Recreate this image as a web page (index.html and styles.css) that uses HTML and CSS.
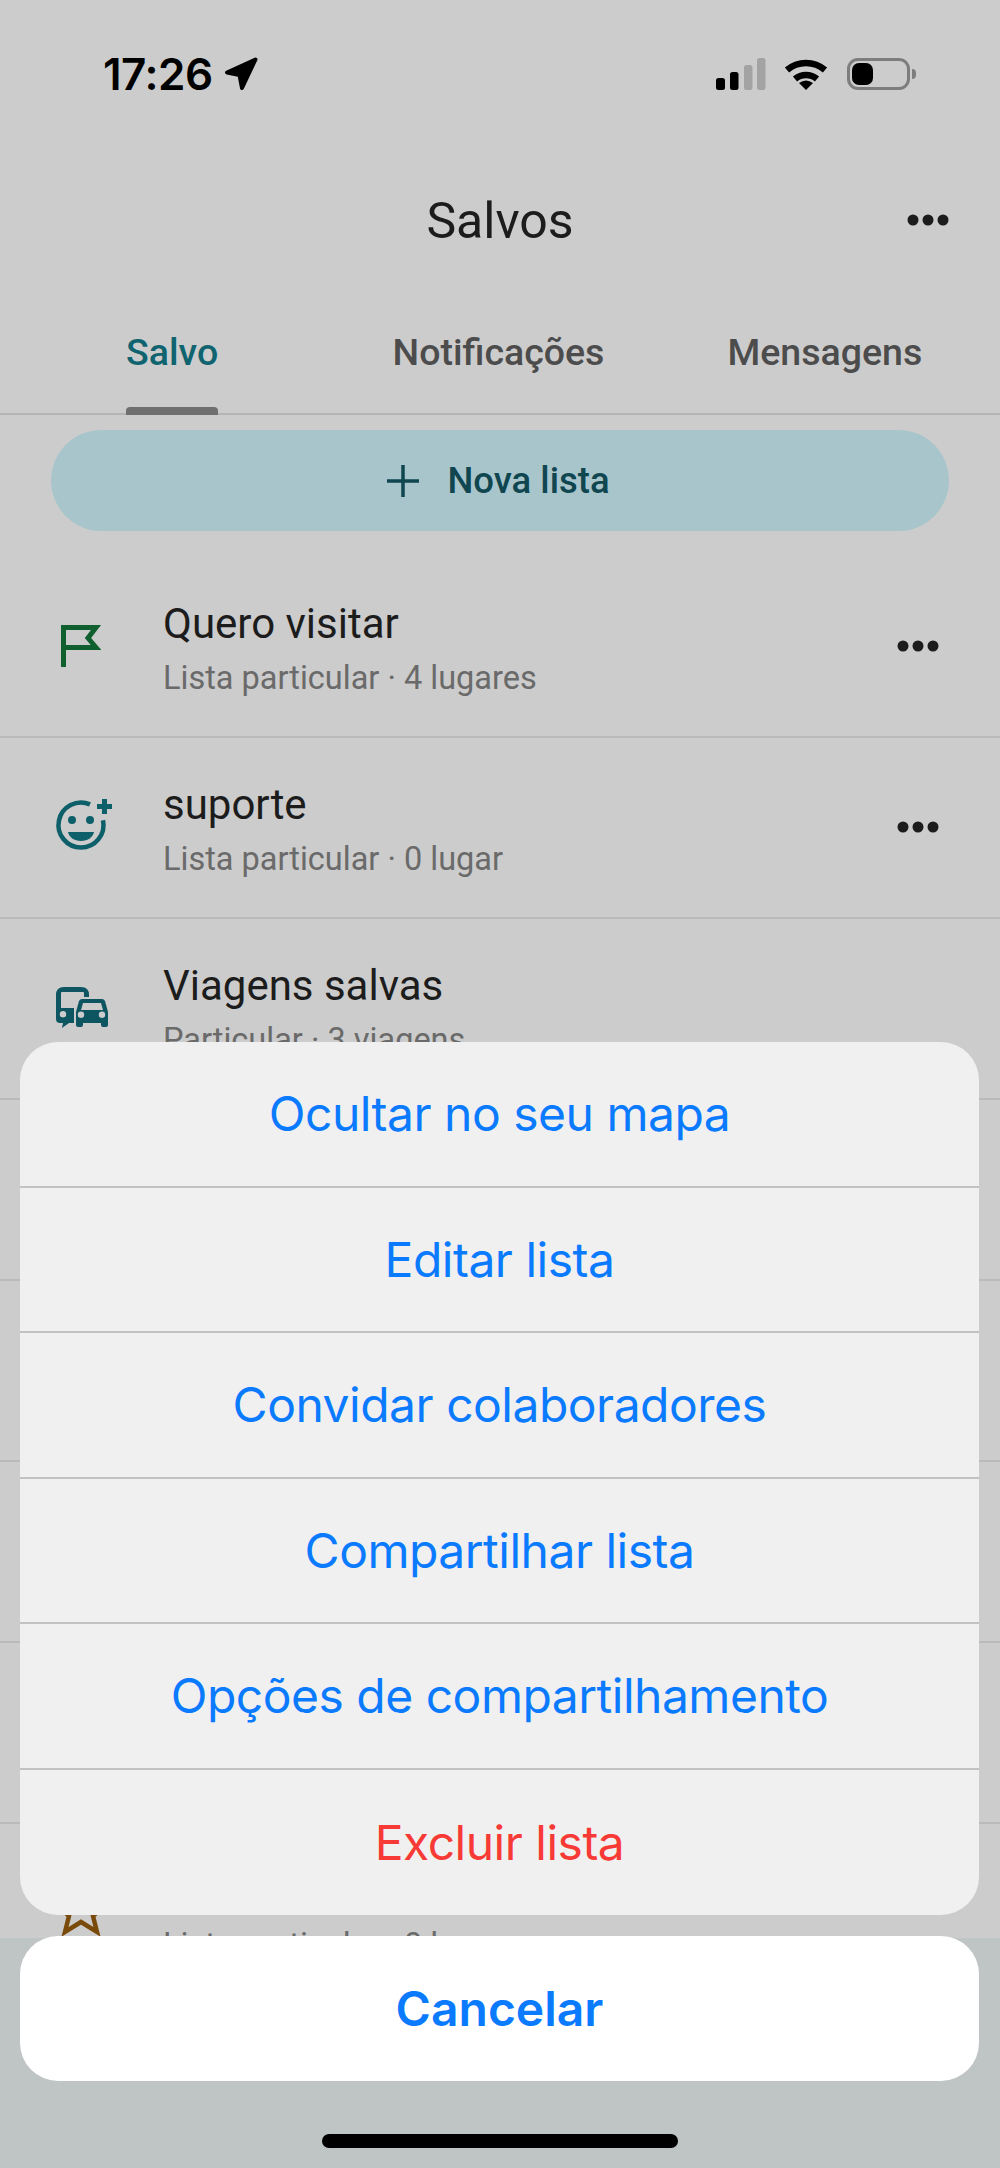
FILE: index.html
```html
<!DOCTYPE html>
<html lang="pt-BR">
<head>
    <meta charset="UTF-8">
    <meta name="viewport" content="width=device-width, initial-scale=1.0">
    <title>Salvos</title>
    <link rel="stylesheet" href="styles.css">
</head>
<body>

    <!-- status bar -->
    <div class="status">
        <div class="status-left">
            <span class="clock">17:26</span>
            <svg class="arrow" width="34" height="34" viewBox="0 0 34 34"><path d="M31.500 2.500 3 15.500 15.500 18 18 31z" fill="#000" stroke="#000" stroke-width="4" stroke-linejoin="round"/></svg>
        </div>
        <div class="status-right">
            <svg class="signal" width="50" height="32" viewBox="0 0 50 32">
                <rect x="0" y="20" width="9" height="12" rx="2.500" fill="#000"/>
                <rect x="14" y="14" width="8.500" height="18" rx="2.500" fill="#000"/>
                <rect x="28" y="7" width="8.500" height="25" rx="2.500" fill="#a3a3a3"/>
                <rect x="41" y="0" width="8.500" height="32" rx="2.500" fill="#a3a3a3"/>
            </svg>
            <svg width="44" height="32" viewBox="0 0 44 32">
                <path d="M3 12A29 29 0 0 1 41 12" fill="none" stroke="#000" stroke-width="6.500"/>
                <path d="M11 21A17 17 0 0 1 33 21" fill="none" stroke="#000" stroke-width="6.500"/>
                <path d="M15 25Q22 20 29 25L22 32Z" fill="#000"/>
            </svg>
            <div class="battery"><div class="battery-level"></div></div>
        </div>
    </div>

    <!-- header -->
    <div class="header">
        <h1 class="title">Salvos</h1>
        <svg class="dots header-dots" width="42" height="12" viewBox="0 0 42 12"><circle cx="6" cy="6" r="5.500"/><circle cx="21" cy="6" r="5.500"/><circle cx="36" cy="6" r="5.500"/></svg>
    </div>

    <div class="tabs">
        <div class="tab active">Salvo<div class="tab-bar"></div></div>
        <div class="tab">Notificações</div>
        <div class="tab">Mensagens</div>
    </div>

    <div class="new-list">
        <svg width="32" height="32" viewBox="0 0 32 32"><path d="M16 0V32M0 16H32" stroke="#0f4650" stroke-width="3.500"/></svg>
        <span>Nova lista</span>
    </div>

    <div class="list">
        <div class="row">
            <svg class="row-icon" width="60" height="60" viewBox="0 0 60 60"><path d="M11.500 51V11.500H44L36 22l8 9.500H11.500" fill="none" stroke="#10602f" stroke-width="5"/></svg>
            <div class="row-text">
                <div class="row-title">Quero visitar</div>
                <div class="row-sub">Lista particular · 4 lugares</div>
            </div>
            <svg class="dots" width="42" height="12" viewBox="0 0 42 12"><circle cx="6" cy="6" r="5.500"/><circle cx="21" cy="6" r="5.500"/><circle cx="36" cy="6" r="5.500"/></svg>
        </div>
        <div class="row">
            <svg class="row-icon" width="60" height="60" viewBox="0 0 60 60">
                <path d="M38 7.400A22.500 22.500 0 1 0 51 23.300" fill="none" stroke="#0d5f69" stroke-width="4.500"/>
                <circle cx="20" cy="23" r="4" fill="#0d5f69"/>
                <circle cx="38" cy="23" r="4" fill="#0d5f69"/>
                <path d="M16 35H42C41 40 36 44 29 44S17 40 16 35Z" fill="#0d5f69"/>
                <path d="M52.500 2V17M45 9.500H60" stroke="#0d5f69" stroke-width="5"/>
            </svg>
            <div class="row-text">
                <div class="row-title">suporte</div>
                <div class="row-sub">Lista particular · 0 lugar</div>
            </div>
            <svg class="dots" width="42" height="12" viewBox="0 0 42 12"><circle cx="6" cy="6" r="5.500"/><circle cx="21" cy="6" r="5.500"/><circle cx="36" cy="6" r="5.500"/></svg>
        </div>
        <div class="row">
            <svg class="row-icon" width="60" height="60" viewBox="0 0 60 60">
                <path fill-rule="evenodd" fill="#0d5561" d="M4 17Q4 9 12 9H29Q37 9 37 17V19H32V15Q32 14 31 14H10Q9 14 9 15V30H22V45H17L10 50 11 45H8Q4 45 4 41ZM11 33A3.200 3.200 0 1 0 11 39.400 3.200 3.200 0 1 0 11 33Z"/>
                <path fill-rule="evenodd" fill="#0d5561" d="M30 21H50Q52 21 53 23L56 34V47Q56 49 54 49H51Q49 49 49 47V45H31V47Q31 49 29 49H26Q24 49 24 47V34L27 23Q28 21 30 21ZM31 25 29 32H51L49 25ZM29 33.500A3.200 3.200 0 1 0 29 39.900 3.200 3.200 0 1 0 29 33.500ZM50 33.500A3.200 3.200 0 1 0 50 39.900 3.200 3.200 0 1 0 50 33.500Z"/>
            </svg>
            <div class="row-text">
                <div class="row-title">Viagens salvas</div>
                <div class="row-sub">Particular · 3 viagens</div>
            </div>
        </div>
        <!-- linhas cobertas pelo menu -->
        <div class="row"></div>
        <div class="row"></div>
        <div class="row"></div>
        <div class="row"></div>
        <div class="row">
            <svg class="row-icon" width="60" height="60" viewBox="0 0 60 60"><path d="M29 3 36 19 54 21 41 33 45 49 29 39 13 49 17 33 4 21 22 19Z" fill="none" stroke="#7a4a0a" stroke-width="4.500"/></svg>
            <div class="row-text">
                <div class="row-title">&nbsp;</div>
                <div class="row-sub">Lista particular · 0 lugar</div>
            </div>
        </div>
    </div>

    <div class="bottom">
        <div class="home-bar"></div>
    </div>

    <!-- menu de acoes, fica por cima da lista -->
    <div class="sheet-wrap">
        <div class="sheet">
            <div class="sheet-item">Ocultar no seu mapa</div>
            <div class="sheet-item">Editar lista</div>
            <div class="sheet-item">Convidar colaboradores</div>
            <div class="sheet-item">Compartilhar lista</div>
            <div class="sheet-item">Opções de compartilhamento</div>
            <div class="sheet-item danger">Excluir lista</div>
        </div>
        <div class="cancel">Cancelar</div>
    </div>

</body>
</html>
```

FILE: styles.css
```css
* { box-sizing: border-box; }
body { position: relative; width: 1000px; height: 2168px; margin: 0; overflow: hidden; background-color: #cccccc; font-family: Roboto, "Noto Sans", sans-serif; color: #1c1c1c; }

/* status bar */
.status { display: flex; justify-content: space-between; align-items: center; height: 148px; padding: 0 84px 0 103px; }
.status-left { display: flex; align-items: center; gap: 11px; }
.clock { font-family: Inter, sans-serif; font-size: 44px; font-weight: 600; color: #000; letter-spacing: -0.500px; line-height: 1; }
.status-right { display: flex; align-items: center; gap: 19px; }
.signal { margin-right: -1px; }
.battery { position: relative; width: 63px; height: 32px; margin-right: 6px; border: 3px solid #7d7d7d; border-radius: 11px; padding: 2px; }
.battery::after { content: ""; position: absolute; top: 8px; right: -9px; width: 4px; height: 10px; background-color: #7d7d7d; border-radius: 0 4px 4px 0; }
.battery-level { width: 21px; height: 100%; background-color: #000; border-radius: 7px; }

/* header */
.header { display: flex; justify-content: center; align-items: center; height: 144px; padding-top: 2px; position: relative; }
.title { margin: 0; font-size: 50px; font-weight: 400; }
.dots { fill: #1c1c1c; flex: none; }
.header-dots { position: absolute; right: 51px; top: 66px; }

/* tabs */
.tabs { display: grid; grid-template-columns: repeat(3, 1fr); height: 123px; padding: 36px 12px 0 9px; border-bottom: 2px solid #b5b5b5; }
.tab { display: flex; flex-direction: column; align-items: center; justify-content: space-between; height: 87px; padding-top: 4px; font-size: 37.500px; font-weight: 470; line-height: 40px; color: #4c4c4c; }
.tab.active { color: #0f6470; }
.tab-bar { width: 92px; height: 8px; background-color: #6f6f6f; border-radius: 4px 4px 0 0; }

/* nova lista */
.new-list { display: flex; align-items: center; justify-content: center; gap: 28px; height: 101px; margin: 15px 51px 0; padding-right: 3px; background-color: #a9c5cc; border-radius: 51px; font-size: 36.500px; font-weight: 470; color: #0f4650; }

/* lista */
.list { height: 1381px; margin-top: 26px; overflow: hidden; }
.row { display: flex; align-items: center; height: 181px; padding: 0 61px 1px 52px; border-bottom: 2px solid #bababa; }
.row-icon { flex: none; margin-right: 51px; }
.row-text { flex: 1; padding-top: 5px; }
.row-title { font-size: 42px; line-height: 52px; margin-bottom: 6px; }
.row-sub { font-size: 32.500px; line-height: 44px; color: #6a6a6a; }

.bottom { display: flex; justify-content: center; height: 230px; padding-top: 196px; background-color: #bfc5c5; }
.home-bar { width: 356px; height: 14px; background-color: #000; border-radius: 7px; }

/* action sheet */
.sheet-wrap { position: absolute; top: 1042px; left: 20px; right: 21px; display: flex; flex-direction: column; gap: 21px; }
.sheet { display: grid; grid-template-rows: repeat(6, 145.500px); background-color: #f0f0f0; border-radius: 38px; overflow: hidden; font-family: Inter, Roboto, sans-serif; }
.sheet-item { display: flex; align-items: center; justify-content: center; font-size: 48px; letter-spacing: -0.500px; color: #0a7aff; border-bottom: 2px solid #c2c2c2; }
.sheet-item:last-child { border-bottom: 0; }
.sheet-item.danger { color: #f73a35; }
.cancel { display: flex; align-items: center; justify-content: center; height: 145px; background-color: #fff; border-radius: 38px; font-family: Inter, Roboto, sans-serif; font-size: 48px; font-weight: 600; color: #0a7aff; }
```
